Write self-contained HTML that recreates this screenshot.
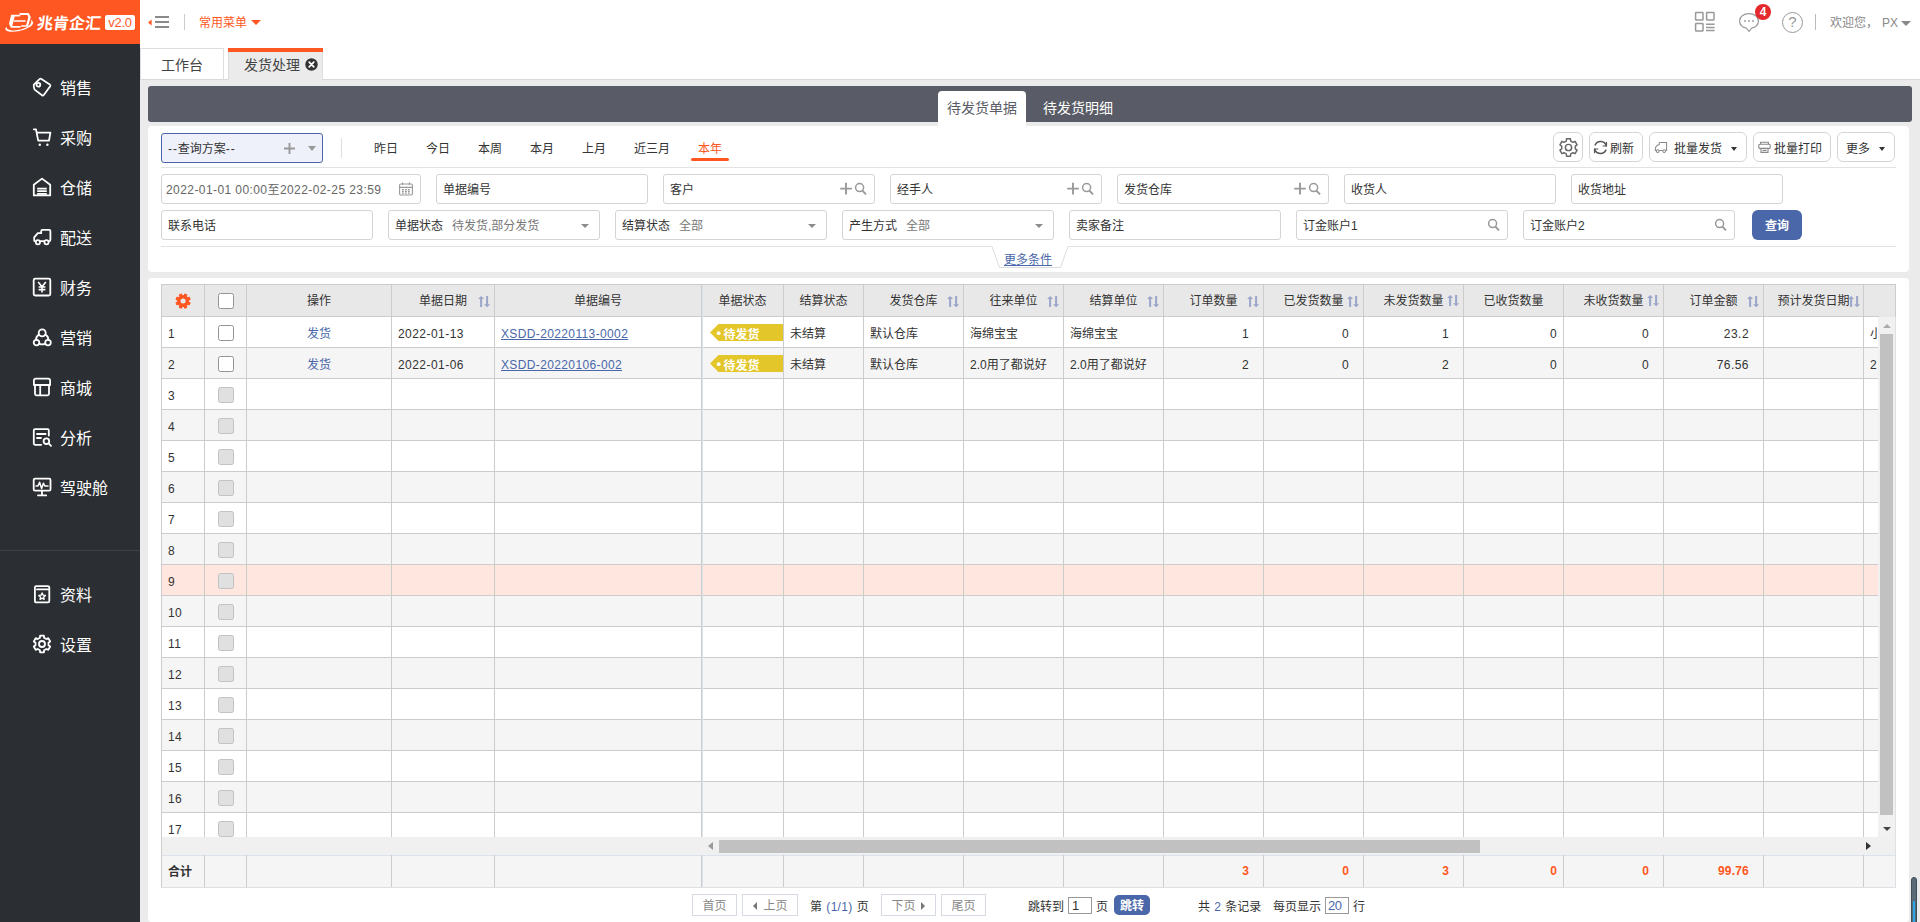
<!DOCTYPE html>
<html lang="zh-CN">
<head>
<meta charset="utf-8">
<title>发货处理</title>
<style>
*{box-sizing:border-box;margin:0;padding:0}
html,body{width:1920px;height:922px;overflow:hidden;background:#ebebeb;font-family:"Liberation Sans","Noto Sans CJK SC",sans-serif;font-size:12px;color:#333}
.abs{position:absolute}
#side{position:absolute;left:0;top:0;width:140px;height:922px;background:#2b2e32}
#logo{position:absolute;left:0;top:0;width:140px;height:44px;background:#ff5722}
.nav{position:absolute;left:0;width:140px;height:50px}
.nav svg{position:absolute;left:31px;top:14px;width:22px;height:22px;fill:none;stroke:#fff;stroke-width:1.8;stroke-linecap:round;stroke-linejoin:round}
.nav span{position:absolute;left:60px;top:14.5px;font-size:16px;line-height:24px;color:#fff}
#sdiv{position:absolute;left:0;top:550px;width:140px;height:1px;background:#3d4045}
#top{position:absolute;left:140px;top:0;width:1780px;height:44px;background:#fff}
#tabs{position:absolute;left:140px;top:44px;width:1780px;height:36px;background:#fff;border-bottom:1px solid #d9d9d9}
.tab{position:absolute;top:4px;height:31px;font-size:14px;line-height:20px;color:#444;border:1px solid #ddd;border-bottom:none;background:#fff}
.tab.on{background:#ebebeb;height:32px;border-top:none}
.tab.on:before{content:"";position:absolute;left:-1px;right:-1px;top:0;height:4px;background:#ff5722}

#bar{position:absolute;left:148px;top:86px;width:1764px;height:36px;background:#595c66;border-radius:3px}
.stab{position:absolute;top:91px;height:35px;font-size:14px;line-height:20px;padding-top:7px;text-align:center}
#fp{position:absolute;left:148px;top:126px;width:1761px;height:146px;background:#fff;border-radius:4px}
.inp{position:absolute;height:30px;border:1px solid #d4d4d4;border-radius:3px;background:#fff;font-size:12px;line-height:28px;color:#333;white-space:nowrap}
.inp b{font-weight:normal;position:absolute;left:6px;top:1px}
.inp i{font-style:normal;color:#777;position:absolute;left:63px;top:1px}
.inp .car{position:absolute;right:10.5px;top:13px;width:0;height:0;border-left:4px solid transparent;border-right:4px solid transparent;border-top:4px solid #8c8c8c}
.qd{position:absolute;top:139px;font-size:12px;line-height:20px;color:#333}
.btn{position:absolute;top:132px;height:30px;border:1px solid #d4d4d4;border-radius:6px;background:#fff;font-size:12px;line-height:30px;color:#333;white-space:nowrap}
.hl{position:absolute;left:161px;width:1735px;height:1px;background:#e2e2e2}

#gp{position:absolute;left:148px;top:278px;width:1761px;height:644px;background:#fff;border-radius:4px}
#grid{position:absolute;left:161px;top:284px;width:1735px;height:604px;border:1px solid #ccc;border-right-color:#dde1e6;border-bottom-color:#dde1e6;background:#fff;overflow:hidden}
.gr{position:absolute;left:0;width:1716px;height:31px;border-bottom:1px solid #ccc}
.gr.ev{background:#f5f5f5}
.gr.hi{background:#ffe6de}
.vl{position:absolute;top:0;width:1px;background:#ccc}
.hd{position:absolute;top:0;height:31px;line-height:33px;text-align:center;color:#333;white-space:nowrap}
.c{position:absolute;top:2px;height:29px;line-height:31px;white-space:nowrap;color:#333}
.n{letter-spacing:.45px}
.cb{position:absolute;left:56px;top:8px;width:16px;height:16px;border:1px solid #c2c2c2;border-radius:2.5px;background:#e0e0e0}
.cb.en{border-color:#949494;background:#fff}
.tag{position:absolute;left:548px;top:7px;width:74px;height:17px}
.st{position:absolute;top:11px;width:13px;height:12px}
.tot{position:absolute;top:0;height:31px;line-height:33px;color:#ff5722;font-weight:bold;text-align:right;letter-spacing:.2px}
.pg{position:absolute;top:894px;height:22px;border:1px solid #d6dbe3;background:#fff;color:#888;font-size:12px;line-height:22px;text-align:center;white-space:nowrap}
.pt{position:absolute;top:897px;word-spacing:1px;font-size:12px;line-height:20px;color:#333;white-space:nowrap}
</style>
</head>
<body>
<!-- SIDEBAR -->
<div id="side">
  <div id="logo">
    <svg class="abs" style="left:4px;top:11px;width:31px;height:22px" viewBox="4 11 31 22" fill="#fff"><path d="M11.2 14.8 H20.6 L20 16.5 H14.7 L12.3 26.1 H20.8 L20.2 27.8 H10.8 L9 23.8 Z"/><path d="M14 20.3 H25.8 L25.4 21.8 H13.6 Z"/><path d="M19.2 13 H28.6 L30.8 17 L28 26.8 H20.8 L21.3 25.2 H26.1 L28.3 17.2 L27.4 14.9 H20.2 Z"/><path d="M7 26.4 Q3.2 29.6 7.6 31.2 Q14.5 32.8 24 29.8 Q32.6 26.8 33.3 22.6 L30.8 19 Q32.6 23.6 27.6 26.8 Q19.6 31.2 11 30.2 Q5.6 29.6 7 26.4 Z"/></svg>
    <span class="abs" style="left:37px;top:11.5px;font-size:16px;line-height:24px;font-weight:bold;color:#fff;letter-spacing:0;transform:skewX(-6deg);display:block;width:66px;white-space:nowrap">兆肯企汇</span>
    <span class="abs" style="left:105px;top:15px;width:30px;height:15px;border-radius:2px;background:#fff;color:#ff5722;font-size:13px;line-height:15px;text-align:center;letter-spacing:-0.3px">v2.0</span>
  </div>
  <div class="nav" style="top:62px"><svg viewBox="0 0 22 22"><path d="M2.8 8.6 L8.8 2.9 Q9.6 2.4 10.4 2.9 L18.8 8.4 Q19.8 9.2 19.2 10.2 L12.8 19 Q12 19.9 11 19.2 L3.6 13.6 Q2.4 11.4 2.8 8.6 Z"/><circle cx="7.4" cy="8.8" r="1.9"/></svg><span>销售</span></div>
  <div class="nav" style="top:112px"><svg viewBox="0 0 22 22"><path d="M2.8 3.3 H5 L7.2 14.6 H18 L19.4 6.7 H5.8"/><circle cx="8.8" cy="18.7" r="1.2" fill="#fff" stroke="none"/><circle cx="16.4" cy="18.7" r="1.2" fill="#fff" stroke="none"/></svg><span>采购</span></div>
  <div class="nav" style="top:162px"><svg viewBox="0 0 22 22"><path d="M2.8 19.4 V8.8 L11 2.6 L19.2 8.8 V19.4 Z"/><path d="M6.2 12.6 H15.8 M6.2 15.2 H15.8 M6.2 17.8 H15.8" stroke-width="1.7" stroke-linecap="butt"/></svg><span>仓储</span></div>
  <div class="nav" style="top:212px"><svg viewBox="0 0 22 22"><path d="M9.8 15.2 H12.6 M10.2 7.2 V5 Q10.2 3.8 11.4 3.8 H18.2 Q19.4 3.8 19.4 5 V14 Q19.4 15.2 18.2 15.2 M10.2 7.2 H6.8 L3.2 11.4 V14.4 Q3.2 15.2 4 15.2"/><circle cx="6.9" cy="16.2" r="2.1"/><circle cx="15.5" cy="16.2" r="2.1"/></svg><span>配送</span></div>
  <div class="nav" style="top:262px"><svg viewBox="0 0 22 22"><rect x="2.7" y="2.7" width="16.6" height="16.8" rx="1.5"/><path d="M7.2 6 L11 10.8 L14.8 6 M11 10.8 V16.4 M7.6 11 H14.4 M7.6 13.6 H14.4" stroke-width="1.6" stroke-linecap="butt"/></svg><span>财务</span></div>
  <div class="nav" style="top:312px"><svg viewBox="0 0 22 22"><circle cx="11.2" cy="6.8" r="3.5"/><circle cx="5.5" cy="16.6" r="2.8"/><circle cx="17" cy="16.6" r="2.8"/><path d="M8 8.6 Q5 10.6 5 13.8 M14.4 8.6 Q17.4 10.6 17.4 13.8 M8.2 17.8 Q11.2 18.8 14.2 17.8"/></svg><span>营销</span></div>
  <div class="nav" style="top:362px"><svg viewBox="0 0 22 22"><path d="M2.9 9 V4.6 Q2.9 2.6 4.9 2.6 H17.1 Q19.1 2.6 19.1 4.6 V9 Z"/><path d="M4 9 V17.8 Q4 19.3 5.5 19.3 H16.5 Q18 19.3 18 17.8 V9 M9.2 9 V19.3"/></svg><span>商城</span></div>
  <div class="nav" style="top:412px"><svg viewBox="0 0 22 22"><path d="M17.8 9.6 V4.4 Q17.8 3.2 16.6 3.2 H4 Q2.8 3.2 2.8 4.4 V17.6 Q2.8 18.8 4 18.8 H10.2"/><path d="M6 8 H14.6 M6 12 H10"/><circle cx="15.4" cy="15.2" r="2.8"/><path d="M17.6 17.4 L20 19.8"/></svg><span>分析</span></div>
  <div class="nav" style="top:462px"><svg viewBox="0 0 22 22"><rect x="2.7" y="2.7" width="16.8" height="12" rx="1.4"/><path d="M5 10 H7 L8.6 6.2 L10.6 12.4 L12.4 7.2 L13.8 10 H17" stroke-width="1.5"/><path d="M11 14.7 V19 M7 19.4 H15.2"/></svg><span>驾驶舱</span></div>
  <div class="nav" style="top:569px"><svg viewBox="0 0 22 22"><path d="M3.9 4.6 Q3.9 3.2 5.3 3.2 H16.9 Q18.3 3.2 18.3 4.6 V18 Q18.3 19.4 16.9 19.4 H5.3 Q3.9 19.4 3.9 18 Z M6 6.4 H18"/><path d="M11.1 10 L12.1 12.1 L14.4 12.4 L12.7 14 L13.1 16.3 L11.1 15.2 L9.1 16.3 L9.5 14 L7.8 12.4 L10.1 12.1 Z" stroke-width="1.4"/></svg><span>资料</span></div>
  <div class="nav" style="top:619px"><svg viewBox="0 0 22 22"><path d="M12.9 2.6 L9.1 2.6 L8.9 4.8 L6.7 6.0 L4.7 5.1 L2.8 8.5 L4.5 9.7 L4.5 12.3 L2.8 13.5 L4.7 16.9 L6.7 16.0 L8.9 17.2 L9.1 19.4 L12.9 19.4 L13.1 17.2 L15.3 16.0 L17.3 16.9 L19.2 13.5 L17.5 12.3 L17.5 9.7 L19.2 8.5 L17.3 5.1 L15.3 6.0 L13.1 4.8 Z"/><circle cx="11" cy="11" r="3"/></svg><span>设置</span></div>
  <div id="sdiv"></div>
</div>
<!-- TOP -->
<div id="top">
  <svg class="abs" style="left:7px;top:14px;width:24px;height:16px" viewBox="0 0 24 16"><path d="M1 8.5 L4.6 5.6 V11.4 Z" fill="#ff5722"/><path d="M8 3 H22 M8 8 H22 M8 13 H22" stroke="#8a8a8a" stroke-width="2.2" fill="none"/></svg>
  <div class="abs" style="left:44px;top:14px;width:1px;height:16px;background:#ccc"></div>
  <span class="abs" style="left:59px;top:14px;font-size:12px;line-height:18px;color:#ff5722">常用菜单</span>
  <div class="abs" style="left:111px;top:20px;width:0;height:0;border-left:5px solid transparent;border-right:5px solid transparent;border-top:5px solid #ff5722"></div>
  <svg class="abs" style="left:1553px;top:10px;width:24px;height:24px" viewBox="0 0 24 24" fill="none" stroke="#999" stroke-width="1.5"><rect x="2.6" y="2.6" width="7.4" height="7.4" rx="0.6"/><rect x="13.6" y="2.6" width="7.4" height="7.4" rx="0.6"/><rect x="2.6" y="13.6" width="7.4" height="7.4" rx="0.6"/><path d="M13 14.2 H21.6 M13 17.4 H21.6 M13 20.6 H21.6"/></svg>
  <svg class="abs" style="left:1597px;top:11px;width:24px;height:24px" viewBox="0 0 24 24" fill="none" stroke="#999" stroke-width="1.2"><path d="M12 2.6 C6.4 2.6 2.6 5.8 2.6 10 C2.6 13.6 5.4 16.4 9.4 17.2 L12 20.4 L14.6 17.2 C18.6 16.4 21.4 13.6 21.4 10 C21.4 5.8 17.6 2.6 12 2.6 Z"/><circle cx="8" cy="10" r="0.9" fill="#999" stroke="none"/><circle cx="12" cy="10" r="0.9" fill="#999" stroke="none"/><circle cx="16" cy="10" r="0.9" fill="#999" stroke="none"/></svg>
  <div class="abs" style="left:1615px;top:4px;width:16px;height:16px;border-radius:8px;background:#e4282c;color:#fff;font-size:12px;line-height:16px;font-weight:bold;text-align:center">4</div>
  <div class="abs" style="left:1642px;top:12px;width:21px;height:21px;border-radius:11px;border:1.4px solid #999;color:#999;font-size:15px;line-height:18.5px;text-align:center">?</div>
  <div class="abs" style="left:1675px;top:14px;width:1px;height:16px;background:#bbb"></div>
  <span class="abs" style="left:1690px;top:14px;font-size:12px;line-height:18px;color:#888;white-space:nowrap">欢迎您，</span>
  <span class="abs" style="left:1742px;top:14px;font-size:12px;line-height:18px;color:#888;white-space:nowrap">PX</span>
  <div class="abs" style="left:1760.5px;top:20.5px;width:0;height:0;border-left:5px solid transparent;border-right:5px solid transparent;border-top:5px solid #888"></div>
</div>
<div id="tabs">
  <div class="tab" style="left:0;width:84px"><span class="abs" style="left:20px;top:6px">工作台</span></div>
  <div class="tab on" style="left:88px;width:95px"><span class="abs" style="left:15px;top:7px">发货处理</span><svg class="abs" style="left:76px;top:9.5px;width:13px;height:13px" viewBox="0 0 13 13"><circle cx="6.5" cy="6.5" r="6.2" fill="#333"/><path d="M4.2 4.2 L8.8 8.8 M8.8 4.2 L4.2 8.8" stroke="#fff" stroke-width="1.7" stroke-linecap="round"/></svg></div>
</div>
<!-- MAIN -->
<div id="main">
<div id="bar"></div>
<div class="stab" style="left:938px;width:88px;background:#fff;color:#595c66;border-radius:4px 4px 0 0">待发货单据</div>
<div class="stab" style="left:1034px;width:88px;color:#fff">待发货明细</div>
<div id="fp"></div>
<div class="inp" style="left:161px;top:133px;width:162px;height:30px;border-color:#4a67a9;background:#eef0fa"><b><span style="letter-spacing:.9px">--</span>查询方案<span style="letter-spacing:.9px">--</span></b>
  <svg class="abs" style="left:121px;top:8px;width:13px;height:13px" viewBox="0 0 13 13" stroke="#999" stroke-width="1.9" fill="none"><path d="M1 6.5 H12 M6.5 1 V12"/></svg>
  <div class="car" style="right:6px;top:12px;border-left-width:4.5px;border-right-width:4.5px;border-top-width:5px;border-top-color:#999"></div></div>
<div class="abs" style="left:341px;top:138px;width:1px;height:20px;background:#ddd"></div>
<span class="qd" style="left:374px">昨日</span><span class="qd" style="left:426px">今日</span><span class="qd" style="left:478px">本周</span><span class="qd" style="left:530px">本月</span><span class="qd" style="left:582px">上月</span><span class="qd" style="left:634px">近三月</span><span class="qd" style="left:698px;color:#ff5722">本年</span><div class="abs" style="left:691px;top:158px;width:38px;height:3px;border-radius:2px;background:#ff5722"></div>
<div class="btn" style="left:1553px;width:30px"><svg class="abs" style="left:2.5px;top:2.5px;width:23px;height:23px" viewBox="0 0 22 22" fill="none" stroke="#666" stroke-width="1.4" stroke-linejoin="round"><path d="M12.9 2.6 L9.1 2.6 L8.9 4.8 L6.7 6.0 L4.7 5.1 L2.8 8.5 L4.5 9.7 L4.5 12.3 L2.8 13.5 L4.7 16.9 L6.7 16.0 L8.9 17.2 L9.1 19.4 L12.9 19.4 L13.1 17.2 L15.3 16.0 L17.3 16.9 L19.2 13.5 L17.5 12.3 L17.5 9.7 L19.2 8.5 L17.3 5.1 L15.3 6.0 L13.1 4.8 Z"/><circle cx="11" cy="11" r="3"/></svg></div>
<div class="btn" style="left:1589px;width:54px"><svg class="abs" style="left:3px;top:7px;width:15px;height:15px" viewBox="0 0 14 14" fill="none" stroke="#555" stroke-width="1.4" stroke-linecap="round"><path d="M12.4 5.4 A5.6 5.6 0 0 0 2 4.6 M1.6 8.6 A5.6 5.6 0 0 0 12 9.4"/><path d="M12.6 2.2 V5.6 H9.4 M1.4 11.8 V8.4 H4.6" stroke-width="1.1"/></svg><span class="abs" style="left:20px;top:1px">刷新</span></div>
<div class="btn" style="left:1649px;width:98px"><svg class="abs" style="left:4px;top:8px;width:14px;height:13px" viewBox="0 0 22 20" fill="none" stroke="#888" stroke-width="1.6"><path d="M8.2 14.8 H13.4 M8.2 2 H19.8 V14.8 H18.6 M8.2 2 V6 M8.2 6 H5.4 L2.2 10.4 V14.8 H3.4"/><circle cx="5.8" cy="15.6" r="2.2"/><circle cx="16" cy="15.6" r="2.2"/></svg><span class="abs" style="left:24px;top:1px">批量发货</span><div class="abs" style="left:81px;top:14px;width:0;height:0;border-left:3.5px solid transparent;border-right:3.5px solid transparent;border-top:4px solid #333"></div></div>
<div class="btn" style="left:1753px;width:78px"><svg class="abs" style="left:4px;top:8px;width:13px;height:13px" viewBox="0 0 13 13" fill="none" stroke="#888" stroke-width="1.1"><rect x="0.8" y="3.2" width="11.4" height="4.2" rx="1"/><path d="M2.6 3.2 V1.2 H10.4 V3.2 M3 7.4 V11.4 H10 V7.4 M4.6 9.4 H8.4"/></svg><span class="abs" style="left:20px;top:1px">批量打印</span></div>
<div class="btn" style="left:1837px;width:58px"><span class="abs" style="left:8px;top:1px">更多</span><div class="abs" style="left:41px;top:14px;width:0;height:0;border-left:3.5px solid transparent;border-right:3.5px solid transparent;border-top:4px solid #333"></div></div>
<div class="hl" style="top:167px"></div>
<div class="inp" style="left:161px;top:174px;width:260px"><b style="left:4px;color:#666;letter-spacing:.42px">2022-01-01 00:00至2022-02-25 23:59</b><svg class="abs" style="left:236px;top:6px;width:16px;height:16px" viewBox="0 0 16 16" fill="none" stroke="#999" stroke-width="1.1"><rect x="1.6" y="3" width="12.8" height="11" rx="1.2"/><path d="M1.6 6.4 H14.4 M4.6 1.6 V4 M11.4 1.6 V4" /><path d="M4 8.6 H12 M4 10.4 H12 M4 12.2 H12" stroke-dasharray="1.8 1.2" stroke-width="1.2"/></svg></div>
<div class="inp" style="left:436px;top:174px;width:212px"><b>单据编号</b></div>
<div class="inp" style="left:663px;top:174px;width:212px"><b>客户</b><svg class="abs" style="right:6px;top:6px;width:28px;height:16px" viewBox="0 0 28 16" fill="none" stroke="#999" stroke-width="1.9"><path d="M0.2 7.6 H11.8 M6 1.8 V13.4"/><circle cx="19.6" cy="6.6" r="4" stroke-width="1.5"/><path d="M22.4 9.6 L26 13.4" stroke-width="1.9"/></svg></div>
<div class="inp" style="left:890px;top:174px;width:212px"><b>经手人</b><svg class="abs" style="right:6px;top:6px;width:28px;height:16px" viewBox="0 0 28 16" fill="none" stroke="#999" stroke-width="1.9"><path d="M0.2 7.6 H11.8 M6 1.8 V13.4"/><circle cx="19.6" cy="6.6" r="4" stroke-width="1.5"/><path d="M22.4 9.6 L26 13.4" stroke-width="1.9"/></svg></div>
<div class="inp" style="left:1117px;top:174px;width:212px"><b>发货仓库</b><svg class="abs" style="right:6px;top:6px;width:28px;height:16px" viewBox="0 0 28 16" fill="none" stroke="#999" stroke-width="1.9"><path d="M0.2 7.6 H11.8 M6 1.8 V13.4"/><circle cx="19.6" cy="6.6" r="4" stroke-width="1.5"/><path d="M22.4 9.6 L26 13.4" stroke-width="1.9"/></svg></div>
<div class="inp" style="left:1344px;top:174px;width:212px"><b>收货人</b></div>
<div class="inp" style="left:1571px;top:174px;width:212px"><b>收货地址</b></div>
<div class="inp" style="left:161px;top:210px;width:212px"><b>联系电话</b></div>
<div class="inp" style="left:388px;top:210px;width:212px"><b>单据状态</b><i>待发货,部分发货</i><div class="car"></div></div>
<div class="inp" style="left:615px;top:210px;width:212px"><b>结算状态</b><i>全部</i><div class="car"></div></div>
<div class="inp" style="left:842px;top:210px;width:212px"><b>产生方式</b><i>全部</i><div class="car"></div></div>
<div class="inp" style="left:1069px;top:210px;width:212px"><b>卖家备注</b></div>
<div class="inp" style="left:1296px;top:210px;width:212px"><b>订金账户1</b><svg class="abs" style="right:6px;top:5.5px;width:14px;height:16px" viewBox="0 0 14 16" fill="none" stroke="#999"><circle cx="5.6" cy="6.6" r="4" stroke-width="1.5"/><path d="M8.4 9.6 L12 13.4" stroke-width="1.9"/></svg></div>
<div class="inp" style="left:1523px;top:210px;width:212px"><b>订金账户2</b><svg class="abs" style="right:6px;top:5.5px;width:14px;height:16px" viewBox="0 0 14 16" fill="none" stroke="#999"><circle cx="5.6" cy="6.6" r="4" stroke-width="1.5"/><path d="M8.4 9.6 L12 13.4" stroke-width="1.9"/></svg></div>
<div class="abs" style="left:1752px;top:210px;width:50px;height:30px;border-radius:6px;background:#4a67a9;color:#fff;font-size:12px;line-height:33px;text-align:center;font-weight:bold">查询</div>
<div class="hl" style="top:246px"></div>
<svg class="abs" style="left:990px;top:246px;width:80px;height:23px" viewBox="0 0 80 23"><path d="M2 0.5 L9.5 21.5 H70.5 L78 0.5" fill="#fff" stroke="#ddd" stroke-width="1"/><path d="M2.5 0.5 H77.5" stroke="#fff" stroke-width="1.2"/></svg>
<span class="abs" style="left:1004px;top:250.5px;font-size:12px;line-height:18px;color:#4a67a9;text-decoration:underline">更多条件</span>
<div id="gp"></div>
<div id="grid">
<div class="abs" style="left:0;top:0;width:1733px;height:32px;background:#e8e8e8;border-bottom:1px solid #ccc"></div>
<svg class="abs" style="left:13.4px;top:8.4px;width:16.2px;height:16.2px" viewBox="0 0 16 16"><path fill="#ff5722" stroke="#ff5722" stroke-width="1" stroke-linejoin="round" d="M14.99 6.26 L14.17 4.29 L12.34 4.79 L11.21 3.66 L11.71 1.83 L9.74 1.01 L8.80 2.66 L7.20 2.66 L6.26 1.01 L4.29 1.83 L4.79 3.66 L3.66 4.79 L1.83 4.29 L1.01 6.26 L2.66 7.20 L2.66 8.80 L1.01 9.74 L1.83 11.71 L3.66 11.21 L4.79 12.34 L4.29 14.17 L6.26 14.99 L7.20 13.34 L8.80 13.34 L9.74 14.99 L11.71 14.17 L11.21 12.34 L12.34 11.21 L14.17 11.71 L14.99 9.74 L13.34 8.80 L13.34 7.20 Z"/><circle cx="8" cy="8" r="2.5" fill="#e8e8e8"/></svg>
<div class="cb en" style="top:8px"></div>
<div class="hd" style="left:85px;width:144px">操作</div><div class="hd" style="left:230px;width:102px">单据日期</div><svg class="st" style="left:315.5px" viewBox="-0.5 0 13 12"><path fill="#9ba6c9" d="M2.6 0 L5.6 3 H3.6 V11 H1.6 V3 H-0.4 Z M7.6 0 H9.6 V8.3 H11.6 L8.6 11.3 L5.6 8.3 H7.6 Z"/></svg><div class="hd" style="left:333px;width:206px">单据编号</div><div class="hd" style="left:540px;width:81px">单据状态</div><div class="hd" style="left:622px;width:79px">结算状态</div><div class="hd" style="left:702px;width:99px">发货仓库</div><svg class="st" style="left:785px" viewBox="-0.5 0 13 12"><path fill="#9ba6c9" d="M2.6 0 L5.6 3 H3.6 V11 H1.6 V3 H-0.4 Z M7.6 0 H9.6 V8.3 H11.6 L8.6 11.3 L5.6 8.3 H7.6 Z"/></svg><div class="hd" style="left:802px;width:99px">往来单位</div><svg class="st" style="left:885px" viewBox="-0.5 0 13 12"><path fill="#9ba6c9" d="M2.6 0 L5.6 3 H3.6 V11 H1.6 V3 H-0.4 Z M7.6 0 H9.6 V8.3 H11.6 L8.6 11.3 L5.6 8.3 H7.6 Z"/></svg><div class="hd" style="left:902px;width:99px">结算单位</div><svg class="st" style="left:985px" viewBox="-0.5 0 13 12"><path fill="#9ba6c9" d="M2.6 0 L5.6 3 H3.6 V11 H1.6 V3 H-0.4 Z M7.6 0 H9.6 V8.3 H11.6 L8.6 11.3 L5.6 8.3 H7.6 Z"/></svg><div class="hd" style="left:1002px;width:99px">订单数量</div><svg class="st" style="left:1085px" viewBox="-0.5 0 13 12"><path fill="#9ba6c9" d="M2.6 0 L5.6 3 H3.6 V11 H1.6 V3 H-0.4 Z M7.6 0 H9.6 V8.3 H11.6 L8.6 11.3 L5.6 8.3 H7.6 Z"/></svg><div class="hd" style="left:1102px;width:99px">已发货数量</div><svg class="st" style="left:1185px" viewBox="-0.5 0 13 12"><path fill="#9ba6c9" d="M2.6 0 L5.6 3 H3.6 V11 H1.6 V3 H-0.4 Z M7.6 0 H9.6 V8.3 H11.6 L8.6 11.3 L5.6 8.3 H7.6 Z"/></svg><div class="hd" style="left:1202px;width:99px">未发货数量</div><svg class="st" style="left:1285px;top:9.5px" viewBox="-0.5 0 13 12"><path fill="#9ba6c9" d="M2.6 0 L5.6 3 H3.6 V11 H1.6 V3 H-0.4 Z M7.6 0 H9.6 V8.3 H11.6 L8.6 11.3 L5.6 8.3 H7.6 Z"/></svg><div class="hd" style="left:1302px;width:99px">已收货数量</div><div class="hd" style="left:1402px;width:99px">未收货数量</div><svg class="st" style="left:1485px;top:9.5px" viewBox="-0.5 0 13 12"><path fill="#9ba6c9" d="M2.6 0 L5.6 3 H3.6 V11 H1.6 V3 H-0.4 Z M7.6 0 H9.6 V8.3 H11.6 L8.6 11.3 L5.6 8.3 H7.6 Z"/></svg><div class="hd" style="left:1502px;width:99px">订单金额</div><svg class="st" style="left:1585px" viewBox="-0.5 0 13 12"><path fill="#9ba6c9" d="M2.6 0 L5.6 3 H3.6 V11 H1.6 V3 H-0.4 Z M7.6 0 H9.6 V8.3 H11.6 L8.6 11.3 L5.6 8.3 H7.6 Z"/></svg><div class="hd" style="left:1602px;width:99px">预计发货日期</div><svg class="st" style="left:1685.5px" viewBox="-0.5 0 13 12"><path fill="#9ba6c9" d="M2.6 0 L5.6 3 H3.6 V11 H1.6 V3 H-0.4 Z M7.6 0 H9.6 V8.3 H11.6 L8.6 11.3 L5.6 8.3 H7.6 Z"/></svg>
<div class="gr" style="top:32px"><span class="c n" style="left:6px">1</span><div class="cb en"></div><span class="c" style="left:85px;width:144px;text-align:center;color:#4a67a9">发货</span><span class="c n" style="left:236px">2022-01-13</span><span class="c n" style="left:339px;color:#4a67a9;text-decoration:underline;letter-spacing:.37px">XSDD-20220113-0002</span><svg class="tag" viewBox="0 0 74 17"><path d="M0 8.5 L8.5 0 H74 V17 H8.5 Z" fill="#e3c62a"/><circle cx="8.7" cy="9.2" r="1.9" fill="#fff"/><text x="13.6" y="14.6" font-size="12" font-weight="bold" fill="#fff" font-family="Liberation Sans,Noto Sans CJK SC,sans-serif">待发货</text></svg><span class="c" style="left:628px">未结算</span><span class="c" style="left:708px">默认仓库</span><span class="c" style="left:808px">海绵宝宝</span><span class="c" style="left:908px">海绵宝宝</span><span class="c n" style="left:1002px;width:85px;text-align:right">1</span><span class="c n" style="left:1102px;width:85px;text-align:right">0</span><span class="c n" style="left:1202px;width:85px;text-align:right">1</span><span class="c n" style="left:1302px;width:93px;text-align:right">0</span><span class="c n" style="left:1402px;width:85px;text-align:right">0</span><span class="c n" style="left:1502px;width:85px;text-align:right">23.2</span><span class="c" style="left:1708px;width:7px;overflow:hidden">小</span></div>
<div class="gr ev" style="top:63px"><span class="c n" style="left:6px">2</span><div class="cb en"></div><span class="c" style="left:85px;width:144px;text-align:center;color:#4a67a9">发货</span><span class="c n" style="left:236px">2022-01-06</span><span class="c n" style="left:339px;color:#4a67a9;text-decoration:underline;letter-spacing:.37px">XSDD-20220106-002</span><svg class="tag" viewBox="0 0 74 17"><path d="M0 8.5 L8.5 0 H74 V17 H8.5 Z" fill="#e3c62a"/><circle cx="8.7" cy="9.2" r="1.9" fill="#fff"/><text x="13.6" y="14.6" font-size="12" font-weight="bold" fill="#fff" font-family="Liberation Sans,Noto Sans CJK SC,sans-serif">待发货</text></svg><span class="c" style="left:628px">未结算</span><span class="c" style="left:708px">默认仓库</span><span class="c" style="left:808px">2.0用了都说好</span><span class="c" style="left:908px">2.0用了都说好</span><span class="c n" style="left:1002px;width:85px;text-align:right">2</span><span class="c n" style="left:1102px;width:85px;text-align:right">0</span><span class="c n" style="left:1202px;width:85px;text-align:right">2</span><span class="c n" style="left:1302px;width:93px;text-align:right">0</span><span class="c n" style="left:1402px;width:85px;text-align:right">0</span><span class="c n" style="left:1502px;width:85px;text-align:right">76.56</span><span class="c" style="left:1708px;width:7px;overflow:hidden">2</span></div>
<div class="gr" style="top:94px"><span class="c n" style="left:6px">3</span><div class="cb"></div></div>
<div class="gr ev" style="top:125px"><span class="c n" style="left:6px">4</span><div class="cb"></div></div>
<div class="gr" style="top:156px"><span class="c n" style="left:6px">5</span><div class="cb"></div></div>
<div class="gr ev" style="top:187px"><span class="c n" style="left:6px">6</span><div class="cb"></div></div>
<div class="gr" style="top:218px"><span class="c n" style="left:6px">7</span><div class="cb"></div></div>
<div class="gr ev" style="top:249px"><span class="c n" style="left:6px">8</span><div class="cb"></div></div>
<div class="gr hi" style="top:280px"><span class="c n" style="left:6px">9</span><div class="cb"></div></div>
<div class="gr ev" style="top:311px"><span class="c n" style="left:6px">10</span><div class="cb"></div></div>
<div class="gr" style="top:342px"><span class="c n" style="left:6px">11</span><div class="cb"></div></div>
<div class="gr ev" style="top:373px"><span class="c n" style="left:6px">12</span><div class="cb"></div></div>
<div class="gr" style="top:404px"><span class="c n" style="left:6px">13</span><div class="cb"></div></div>
<div class="gr ev" style="top:435px"><span class="c n" style="left:6px">14</span><div class="cb"></div></div>
<div class="gr" style="top:466px"><span class="c n" style="left:6px">15</span><div class="cb"></div></div>
<div class="gr ev" style="top:497px"><span class="c n" style="left:6px">16</span><div class="cb"></div></div>
<div class="gr" style="top:528px"><span class="c n" style="left:6px">17</span><div class="cb"></div></div>
<div class="abs" style="left:0;top:552px;width:1733px;height:18px;background:#f0f0f0"></div>
<div class="abs" style="left:557px;top:555px;width:761px;height:13px;background:#c1c1c1"></div>
<div class="abs" style="left:546px;top:557px;width:0;height:0;border-top:4px solid transparent;border-bottom:4px solid transparent;border-right:5px solid #999"></div>
<div class="abs" style="left:1704px;top:557px;width:0;height:0;border-top:4px solid transparent;border-bottom:4px solid transparent;border-left:5px solid #333"></div>
<div class="abs" style="left:1717px;top:31px;width:16px;height:1px;background:#e8e8e8"></div>
<div class="abs" style="left:1716px;top:32px;width:17px;height:520px;background:#f1f1f1"></div>
<div class="abs" style="left:1718px;top:49px;width:13px;height:481px;background:#c1c1c1"></div>
<div class="abs" style="left:1721px;top:39px;width:0;height:0;border-left:4px solid transparent;border-right:4px solid transparent;border-bottom:4.5px solid #aaa"></div>
<div class="abs" style="left:1721px;top:542px;width:0;height:0;border-left:4px solid transparent;border-right:4px solid transparent;border-top:4.5px solid #444"></div>
<div class="abs" style="left:0;top:570px;width:1733px;height:32px;background:#f5f5f5;border-top:1px solid #dde3ea"></div>
<span class="abs" style="left:6px;top:570px;line-height:35px;font-weight:bold;color:#333">合计</span>
<span class="tot" style="top:570px;left:1002px;width:85px">3</span><span class="tot" style="top:570px;left:1102px;width:85px">0</span><span class="tot" style="top:570px;left:1202px;width:85px">3</span><span class="tot" style="top:570px;left:1302px;width:93px">0</span><span class="tot" style="top:570px;left:1402px;width:85px">0</span><span class="tot" style="top:570px;left:1502px;width:85px">99.76</span>
<div class="vl" style="left:42px;height:552px"></div><div class="vl" style="left:42px;top:570px;height:32px"></div><div class="vl" style="left:84px;height:552px"></div><div class="vl" style="left:84px;top:570px;height:32px"></div><div class="vl" style="left:229px;height:552px"></div><div class="vl" style="left:229px;top:570px;height:32px"></div><div class="vl" style="left:332px;height:552px"></div><div class="vl" style="left:332px;top:570px;height:32px"></div><div class="vl" style="left:539px;height:552px"></div><div class="vl" style="left:539px;top:570px;height:32px"></div><div class="vl" style="left:621px;height:552px"></div><div class="vl" style="left:621px;top:570px;height:32px"></div><div class="vl" style="left:701px;height:552px"></div><div class="vl" style="left:701px;top:570px;height:32px"></div><div class="vl" style="left:801px;height:552px"></div><div class="vl" style="left:801px;top:570px;height:32px"></div><div class="vl" style="left:901px;height:552px"></div><div class="vl" style="left:901px;top:570px;height:32px"></div><div class="vl" style="left:1001px;height:552px"></div><div class="vl" style="left:1001px;top:570px;height:32px"></div><div class="vl" style="left:1101px;height:552px"></div><div class="vl" style="left:1101px;top:570px;height:32px"></div><div class="vl" style="left:1201px;height:552px"></div><div class="vl" style="left:1201px;top:570px;height:32px"></div><div class="vl" style="left:1301px;height:552px"></div><div class="vl" style="left:1301px;top:570px;height:32px"></div><div class="vl" style="left:1401px;height:552px"></div><div class="vl" style="left:1401px;top:570px;height:32px"></div><div class="vl" style="left:1501px;height:552px"></div><div class="vl" style="left:1501px;top:570px;height:32px"></div><div class="vl" style="left:1601px;height:552px"></div><div class="vl" style="left:1601px;top:570px;height:32px"></div><div class="vl" style="left:1701px;height:552px"></div><div class="vl" style="left:1701px;top:570px;height:32px"></div><div class="vl" style="left:540px;height:552px;background:#dde3ea"></div><div class="vl" style="left:540px;top:570px;height:32px;background:#dde3ea"></div>
</div>
<div class="abs" style="left:1895px;top:284px;width:1px;height:33px;background:#ccc"></div>
<div class="pg" style="left:692px;width:45px">首页</div>
<div class="pg" style="left:742px;width:56px;text-align:left;padding-left:20.5px">上页<i class="abs" style="left:10px;top:6.5px;width:0;height:0;border-top:4px solid transparent;border-bottom:4px solid transparent;border-right:4.5px solid #777"></i></div>
<span class="pt" style="left:810px">第 <span style="color:#4a67a9;letter-spacing:.3px">(1/1)</span> 页</span>
<div class="pg" style="left:881px;width:55px;text-align:left;padding-left:9.5px">下页<i class="abs" style="left:39px;top:6.5px;width:0;height:0;border-top:4px solid transparent;border-bottom:4px solid transparent;border-left:4.5px solid #777"></i></div>
<div class="pg" style="left:941px;width:45px">尾页</div>
<span class="pt" style="left:1028px">跳转到</span>
<div class="abs" style="left:1068px;top:897px;width:24px;height:17px;border:1px solid #999;background:#fff;font-size:13px;line-height:16px;padding-left:3px;color:#333">1</div>
<span class="pt" style="left:1096px">页</span>
<div class="abs" style="left:1114px;top:895px;width:36px;height:20px;border-radius:5px;background:#4a67a9;color:#fff;font-size:12px;line-height:22px;text-align:center;font-weight:bold">跳转</div>
<span class="pt" style="left:1198px">共 <span style="color:#4a67a9">2</span> 条记录</span>
<span class="pt" style="left:1273px">每页显示</span>
<div class="abs" style="left:1325px;top:897px;width:24px;height:17px;border:1px solid #999;background:#fff;font-size:13px;line-height:16px;padding-left:2px;color:#4a67a9;letter-spacing:-.4px">20</div>
<span class="pt" style="left:1353px">行</span>
<div class="abs" style="left:1911px;top:877px;width:6px;height:50px;border-radius:3px;background:#5c6b78;border:1px solid #3f4d59"></div>
<div class="abs" style="left:1912.6px;top:901px;width:2.6px;height:22px;background:#29a6e8"></div>
</div>
</body>
</html>
